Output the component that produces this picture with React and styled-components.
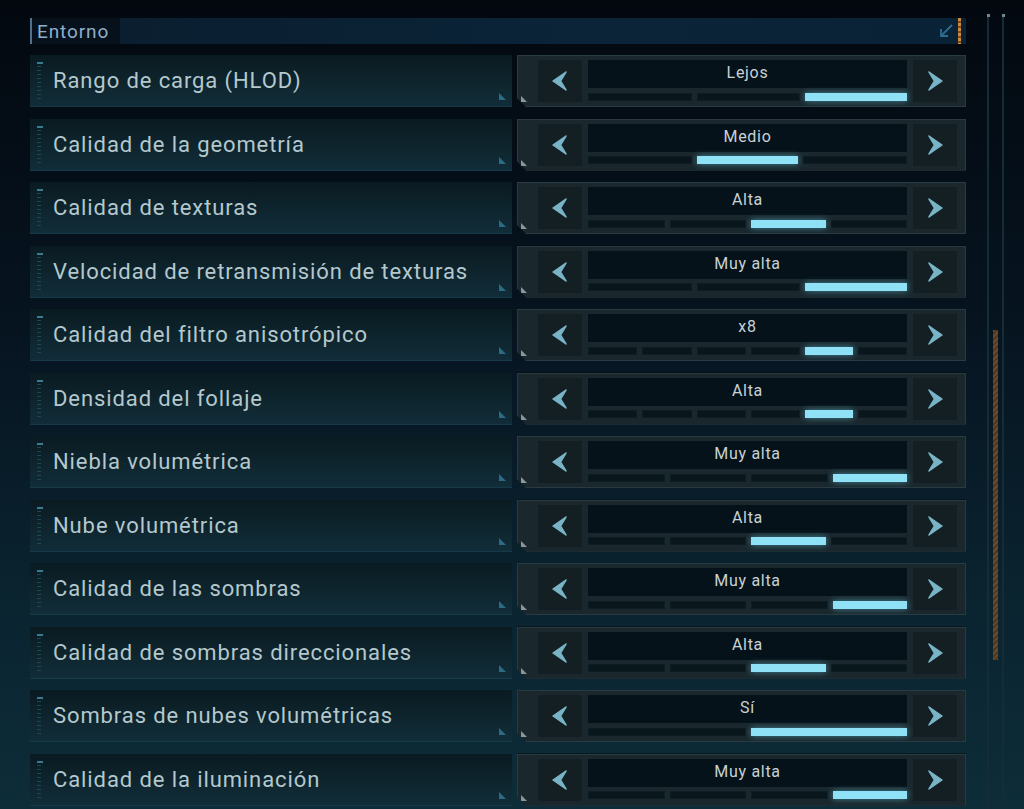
import styled, { createGlobalStyle } from "styled-components";

const GlobalStyle = createGlobalStyle`
  html, body {
    margin: 0;
    padding: 0;
  }
  body {
    width: 1024px;
    height: 809px;
    overflow: hidden;
    background: linear-gradient(180deg, #03080f 0%, #061420 40%, #0a2430 75%, #0d2d39 100%);
    font-family: Roboto, "Noto Sans", sans-serif;
  }
`;

const Page = styled.div`
  display: flex;
  gap: 21px;
  padding: 18px 0 0 30px;
  height: 809px;
  box-sizing: border-box;
`;

const Content = styled.div`
  width: 936px;
  display: flex;
  flex-direction: column;
  gap: 11px;
`;

const Header = styled.div`
  height: 26px;
  display: flex;
  align-items: stretch;
  background: linear-gradient(90deg, #0a1d2e 0%, #0b2438 60%, #0a2236 100%);
  border-left: 2px solid #4f7190;
`;

const HeaderTitle = styled.div`
  background: #07111b;
  color: #8eaecb;
  font-size: 19px;
  letter-spacing: 0.9px;
  padding: 0 6px 0 5px;
  display: flex;
  align-items: center;
  width: 77px;
`;

const HeaderFill = styled.div`
  flex: 1;
  display: flex;
  justify-content: flex-end;
  align-items: center;
  gap: 4px;
`;

const OrangeDash = styled.div`
  width: 3px;
  height: 26px;
  margin-right: 5px;
  background: repeating-linear-gradient(180deg, #d08a3a 0 3px, #7a4f22 3px 5px);
`;

const Rows = styled.div`
  display: flex;
  flex-direction: column;
  gap: 11.5px;
`;

const Row = styled.div`
  display: flex;
  gap: 5px;
  height: 52px;
`;

const Label = styled.div`
  position: relative;
  width: 482px;
  box-sizing: border-box;
  padding-left: 23px;
  display: flex;
  align-items: center;
  background: linear-gradient(180deg, #0a1a21 0%, #0e252e 55%, #112d39 100%);
  border-bottom: 1px solid #163a48;
  color: #b4c8cd;
  font-size: 22px;
  letter-spacing: 0.9px;
`;

const Ruler = styled.div`
  position: absolute;
  left: 7px;
  top: 7px;
  bottom: 5px;
  width: 4px;
  background: repeating-linear-gradient(180deg, #1d4656 0 1px, transparent 1px 4px);
  &::before {
    content: "";
    position: absolute;
    left: 0;
    top: 0;
    width: 6px;
    height: 2px;
    background: #3c7a92;
  }
`;

const CornerMark = styled.div`
  position: absolute;
  right: 6px;
  bottom: 6px;
  width: 0;
  height: 0;
  border-left: 7px solid transparent;
  border-bottom: 7px solid #2b6b86;
  transform: scaleX(-1);
`;

const Selector = styled.div`
  position: relative;
  width: 449px;
  box-sizing: border-box;
  display: flex;
  gap: 6px;
  padding: 4px 8px 4px 20px;
  background: #1a282e;
  border: 1px solid #2a3a41;
  box-shadow: 0 0 0 1px #03080b;
  clip-path: polygon(0 0, 100% 0, 100% 100%, 9px 100%, 0 calc(100% - 9px));
  &::before {
    content: "";
    position: absolute;
    left: 3px;
    bottom: 4px;
    border-right: 6px solid transparent;
    border-bottom: 6px solid #8a969b;
  }
`;

const ArrowButton = styled.div`
  width: 44px;
  background: #141f24;
  display: flex;
  align-items: center;
  justify-content: center;
`;

const Middle = styled.div`
  flex: 1;
  display: flex;
  flex-direction: column;
  gap: 3px;
`;

const Value = styled.div`
  height: 28px;
  background: #06121a;
  color: #c6d2d6;
  font-size: 16px;
  letter-spacing: 0.7px;
  display: flex;
  align-items: flex-start;
  justify-content: center;
  padding-top: 3px;
  box-sizing: border-box;
`;

const Segments = styled.div`
  flex: 1;
  display: flex;
  gap: 5px;
  align-items: center;
`;

const Segment = styled.div`
  flex: 1;
  height: 8px;
  background: ${(p) => (p.$on ? "#8fe2f5" : "#09161c")};
  box-shadow: ${(p) => (p.$on ? "0 0 6px rgba(110, 210, 240, 0.55)" : "none")};
  border: ${(p) => (p.$on ? "none" : "1px solid #0d1d24")};
  box-sizing: border-box;
`;

const ScrollArea = styled.div`
  position: relative;
  width: 17px;
  height: 809px;
  margin-top: -4px;
  display: flex;
  justify-content: space-between;
`;

const ScrollLine = styled.div`
  width: 2px;
  height: 100%;
  background: #152c37;
  &::before {
    content: "";
    display: block;
    width: 3px;
    height: 3px;
    margin-left: -0.5px;
    background: #6e8790;
  }
`;

const Thumb = styled.div`
  position: absolute;
  left: 6px;
  top: 316px;
  width: 5px;
  height: 330px;
  background: repeating-linear-gradient(135deg, #6a4a2b 0 2px, #4e3820 2px 4px);
`;

const Chevron = ({ dir }) => (
  <svg width="18" height="22" viewBox="0 0 18 22">
    <path
      d={dir === "left" ? "M15 2 L2 11 L15 20 L9.5 11 Z" : "M3 2 L16 11 L3 20 L8.5 11 Z"}
      fill="#78b4c6"
      stroke="#78b4c6"
      strokeWidth="1.5"
      strokeLinejoin="round"
    />
  </svg>
);

const CornerArrow = () => (
  <svg width="16" height="16" viewBox="0 0 16 16">
    <path d="M14 2 L3 13 M3 6 L3 13 L10 13" stroke="#2c6d8e" strokeWidth="1.8" fill="none" />
  </svg>
);

const settings = [
  { label: "Rango de carga (HLOD)", value: "Lejos", count: 3, active: 2 },
  { label: "Calidad de la geometría", value: "Medio", count: 3, active: 1 },
  { label: "Calidad de texturas", value: "Alta", count: 4, active: 2 },
  { label: "Velocidad de retransmisión de texturas", value: "Muy alta", count: 3, active: 2 },
  { label: "Calidad del filtro anisotrópico", value: "x8", count: 6, active: 4 },
  { label: "Densidad del follaje", value: "Alta", count: 6, active: 4 },
  { label: "Niebla volumétrica", value: "Muy alta", count: 4, active: 3 },
  { label: "Nube volumétrica", value: "Alta", count: 4, active: 2 },
  { label: "Calidad de las sombras", value: "Muy alta", count: 4, active: 3 },
  { label: "Calidad de sombras direccionales", value: "Alta", count: 4, active: 2 },
  { label: "Sombras de nubes volumétricas", value: "Sí", count: 2, active: 1 },
  { label: "Calidad de la iluminación", value: "Muy alta", count: 4, active: 3 },
];

export default function App() {
  return (
    <>
      <GlobalStyle />
      <Page>
        <Content>
          <Header>
            <HeaderTitle>Entorno</HeaderTitle>
            <HeaderFill>
              <CornerArrow />
              <OrangeDash />
            </HeaderFill>
          </Header>
          <Rows>
            {settings.map((s) => (
              <Row key={s.label}>
                <Label>
                  <Ruler />
                  {s.label}
                  <CornerMark />
                </Label>
                <Selector>
                  <ArrowButton>
                    <Chevron dir="left" />
                  </ArrowButton>
                  <Middle>
                    <Value>{s.value}</Value>
                    <Segments>
                      {Array.from({ length: s.count }).map((_, i) => (
                        <Segment key={i} $on={i === s.active} />
                      ))}
                    </Segments>
                  </Middle>
                  <ArrowButton>
                    <Chevron dir="right" />
                  </ArrowButton>
                </Selector>
              </Row>
            ))}
          </Rows>
        </Content>
        <ScrollArea>
          <ScrollLine />
          <ScrollLine />
          <Thumb />
        </ScrollArea>
      </Page>
    </>
  );
}
